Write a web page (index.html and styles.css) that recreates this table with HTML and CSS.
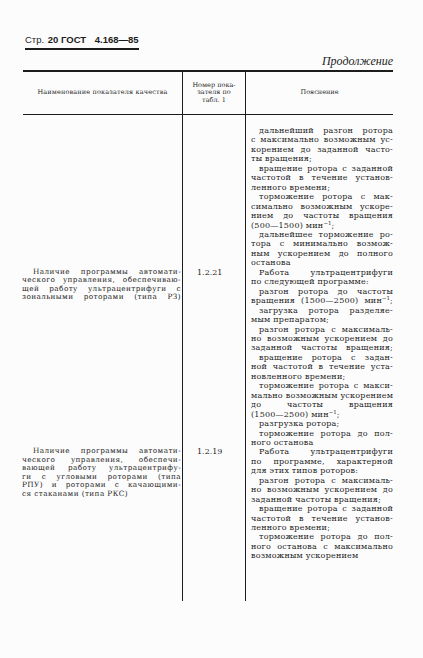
FILE: index.html
```html
<!DOCTYPE html>
<html lang="ru">
<head>
<meta charset="utf-8">
<title>ГОСТ 4.168—85, стр. 20</title>
<link rel="stylesheet" href="styles.css">
</head>
<body>
<div class="page">
  <div class="runhead"><span class="rh-str">Стр.</span> <b>20 ГОСТ</b> <b class="rh-num">4.168—85</b></div>
  <div class="cont">Продолжение</div>
  <div class="tbl">
    <div class="th c1">Наименование показателя качества</div>
    <div class="th c2">Номер пока-<br>зателя по<br>табл. 1</div>
    <div class="th c3">Пояснение</div>

    <div class="td c1"></div>
    <div class="td c2"></div>
    <div class="td c3 first">
      <div class="l j in">дальнейший разгон ротора</div>
      <div class="l j">с максимально возможным ус-</div>
      <div class="l j">корением до заданной часто-</div>
      <div class="l">ты вращения;</div>
      <div class="l j in">вращение ротора с заданной</div>
      <div class="l j">частотой в течение установ-</div>
      <div class="l">ленного времени;</div>
      <div class="l j in">торможение ротора с мак-</div>
      <div class="l j">симально возможным ускоре-</div>
      <div class="l j">нием до частоты вращения</div>
      <div class="l">(500—1500) мин<span class="sup">−1</span>;</div>
      <div class="l j in">дальнейшее торможение ро-</div>
      <div class="l j">тора с минимально возмож-</div>
      <div class="l j">ным ускорением до полного</div>
      <div class="l">останова</div>
    </div>

    <div class="td c1">
      <div class="k j in">Наличие программы автомати-</div>
      <div class="k j">ческого управления, обеспечиваю-</div>
      <div class="k j">щей работу ультрацентрифуги с</div>
      <div class="k j">зональными роторами (типа РЗ)</div>
    </div>
    <div class="td c2"><div class="num">1.2.21</div></div>
    <div class="td c3">
      <div class="l j in">Работа ультрацентрифуги</div>
      <div class="l">по следующей программе:</div>
      <div class="l j in">разгон ротора до частоты</div>
      <div class="l j">вращения (1500—2500) мин<span class="sup">−1</span>;</div>
      <div class="l j in">загрузка ротора разделяе-</div>
      <div class="l">мым препаратом;</div>
      <div class="l j in">разгон ротора с максималь-</div>
      <div class="l j">но возможным ускорением до</div>
      <div class="l j">заданной частоты вращения;</div>
      <div class="l j in">вращение ротора с задан-</div>
      <div class="l j">ной частотой в течение уста-</div>
      <div class="l">новленного времени;</div>
      <div class="l j in">торможение ротора с макси-</div>
      <div class="l j">мально возможным ускорением</div>
      <div class="l j">до частоты вращения</div>
      <div class="l">(1500—2500) мин<span class="sup">−1</span>;</div>
      <div class="l in">разгрузка ротора;</div>
      <div class="l j in">торможение ротора до пол-</div>
      <div class="l">ного останова</div>
    </div>

    <div class="td c1">
      <div class="k j in">Наличие программы автомати-</div>
      <div class="k j">ческого управления, обеспечи-</div>
      <div class="k j">вающей работу ультрацентрифу-</div>
      <div class="k j">ги с угловыми роторами (типа</div>
      <div class="k j">РПУ) и роторами с качающими-</div>
      <div class="k">ся стаканами (типа РКС)</div>
    </div>
    <div class="td c2 last"><div class="num">1.2.19</div></div>
    <div class="td c3 last">
      <div class="l j in">Работа ультрацентрифуги</div>
      <div class="l j">по программе, характерной</div>
      <div class="l">для этих типов роторов:</div>
      <div class="l j in">разгон ротора с максималь-</div>
      <div class="l j">но возможным ускорением до</div>
      <div class="l">заданной частоты вращения;</div>
      <div class="l j in">вращение ротора с заданной</div>
      <div class="l j">частотой в течение установ-</div>
      <div class="l">ленного времени;</div>
      <div class="l j in">торможение ротора до пол-</div>
      <div class="l j">ного останова с максимально</div>
      <div class="l">возможным ускорением</div>
    </div>
  </div>
</div>
</body>
</html>
```

FILE: styles.css
```css
html, body {
  margin: 0;
  padding: 0;
  background: #fcfcfc;
}

body {
  font-family: "DejaVu Serif", "Liberation Serif", serif;
  color: #1c1c1c;
}

.page {
  width: 423px;
  height: 658px;
  overflow: hidden;
  padding-top: 28px;
  box-sizing: border-box;
}

.runhead {
  display: inline-block;
  margin-left: 25px;
  font-family: "Liberation Sans", Arial, sans-serif;
  font-size: 9.5px;
  line-height: 12px;
  padding-bottom: 2px;
  border-bottom: 2px solid #1c1c1c;
}

.runhead b {
  font-weight: bold;
}

.rh-str {
  margin-right: 1px;
}

.rh-num {
  margin-left: 6px;
}

.cont {
  text-align: right;
  padding-right: 30px;
  margin-top: 4px;
  font-family: "Liberation Serif", serif;
  font-style: italic;
  font-size: 12px;
  line-height: 14px;
}

.tbl {
  display: grid;
  grid-template-columns: 159px 64px 147px;
  margin-left: 23px;
  margin-top: 2px;
  width: 370px;
  border-top: 2px solid #1c1c1c;
}

.th {
  height: 42px;
  display: flex;
  align-items: center;
  justify-content: center;
  text-align: center;
  font-size: 6.5px;
  line-height: 7.6px;
  border-bottom: 1px solid #1c1c1c;
}

.th.c1 {
  letter-spacing: 0.15px;
}

.c2 {
  border-left: 1px solid #1c1c1c;
  border-right: 1px solid #1c1c1c;
}

.td {
  font-size: 8px;
}

.td.c3 {
  padding-left: 5px;
}

.td.first {
  padding-top: 11px;
}

.td.last {
  padding-bottom: 40px;
}

.td.c1 {
  margin-left: -1px;
  padding-right: 1px;
}

.l {
  line-height: 9.45px;
  white-space: nowrap;
  text-align: left;
  letter-spacing: 0.22px;
}

.k {
  font-size: 7.3px;
  line-height: 8.5px;
  white-space: nowrap;
  text-align: left;
  letter-spacing: 0.4px;
}

.j {
  text-align: justify;
  text-align-last: justify;
}

.in {
  text-indent: 8px;
}

.k.in {
  text-indent: 11px;
}

.num {
  padding-left: 14px;
  line-height: 9.45px;
}

.sup {
  font-size: 5.5px;
  vertical-align: 3px;
  line-height: 0;
  letter-spacing: 0;
}
```
